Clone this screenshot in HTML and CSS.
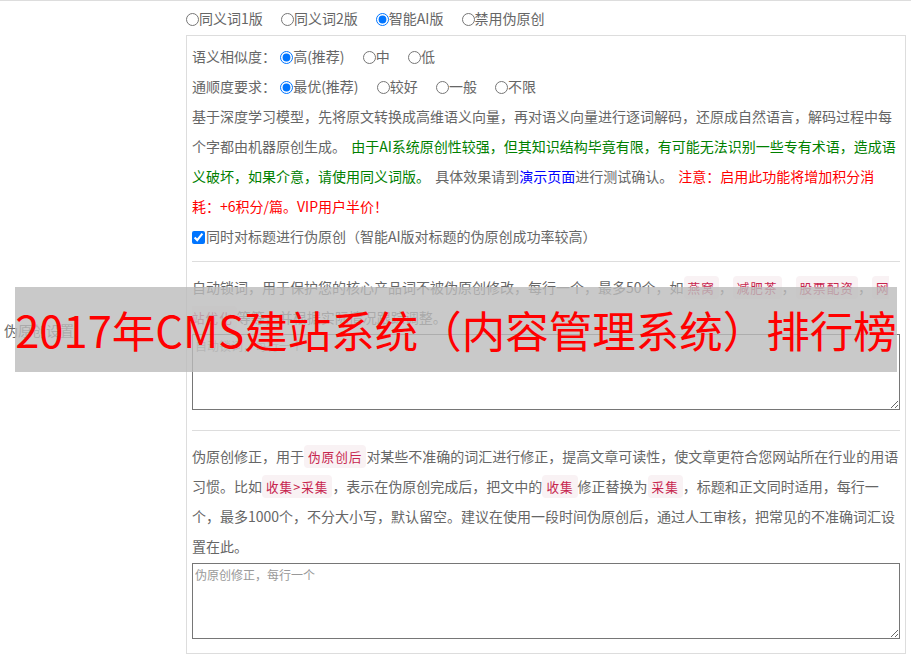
FILE: index.html
```html
<!DOCTYPE html>
<html>
<head>
    <meta charset="utf-8">
    <title>伪原创设置</title>
    <link rel="stylesheet" href="styles.css">
</head>
<body>
    <div class="form-row">
        <div class="row-label">伪原创设置</div>
        <div class="row-field">
            <div class="mode-line">
                <label class="opt"><input type="radio" name="mode">同义词1版</label>
                <label class="opt"><input type="radio" name="mode">同义词2版</label>
                <label class="opt"><input type="radio" name="mode" checked>智能AI版</label>
                <label class="opt"><input type="radio" name="mode">禁用伪原创</label>
            </div>

            <div class="panel">
                <div class="line">
                    <span class="line-title">语义相似度：</span>
                    <label class="opt"><input type="radio" name="sim" checked>高(推荐)</label>
                    <label class="opt"><input type="radio" name="sim">中</label>
                    <label class="opt"><input type="radio" name="sim">低</label>
                </div>
                <div class="line">
                    <span class="line-title">通顺度要求：</span>
                    <label class="opt"><input type="radio" name="flow" checked>最优(推荐)</label>
                    <label class="opt"><input type="radio" name="flow">较好</label>
                    <label class="opt"><input type="radio" name="flow">一般</label>
                    <label class="opt"><input type="radio" name="flow">不限</label>
                </div>
                <p class="desc">基于深度学习模型，先将原文转换成高维语义向量，再对语义向量进行逐词解码，还原成自然语言，解码过程中每个字都由机器原创生成。 <span class="green">由于AI系统原创性较强，但其知识结构毕竟有限，有可能无法识别一些专有术语，造成语义破坏，如果介意，请使用同义词版。</span> 具体效果请到<a class="demo" href="#">演示页面</a>进行测试确认。 <span class="red">注意：启用此功能将增加积分消耗：+6积分/篇。VIP用户半价！</span></p>
                <div class="line">
                    <label class="check"><input type="checkbox" checked>同时对标题进行伪原创（智能AI版对标题的伪原创成功率较高）</label>
                </div>

                <hr>

                <p class="desc">自动锁词，用于保护您的核心产品词不被伪原创修改，每行一个，最多50个，如<code>燕窝</code>，<code>减肥茶</code>，<code>股票配资</code>，<code>网站优化</code>等等，并根据实际情况跟踪调整。</p>
                <textarea placeholder="自动锁词，每行一个"></textarea>

                <hr class="after-box">

                <p class="desc">伪原创修正，用于<code>伪原创后</code>对某些不准确的词汇进行修正，提高文章可读性，使文章更符合您网站所在行业的用语习惯。比如<code>收集&gt;采集</code>，表示在伪原创完成后，把文中的<code>收集</code>修正替换为<code>采集</code>，标题和正文同时适用，每行一个，最多1000个，不分大小写，默认留空。建议在使用一段时间伪原创后，通过人工审核，把常见的不准确词汇设置在此。</p>
                <textarea placeholder="伪原创修正，每行一个"></textarea>
            </div>
        </div>
    </div>

    <div class="banner">2017年CMS建站系统（内容管理系统）排行榜</div>
</body>
</html>
```

FILE: styles.css
```css
body {
    margin: 0;
    padding: 0;
    font-family: "Noto Sans CJK SC", "Liberation Sans", sans-serif;
    font-size: 14px;
    color: #666;
    background-color: #fff;
}

.form-row {
    display: grid;
    grid-template-columns: 186px 1fr;
    border-top: 1px solid #ddd;
}

.row-label {
    align-self: center;
    padding-left: 4px;
    line-height: 20px;
}

.row-field {
    padding-bottom: 4px;
    padding-right: 5px;
}

.mode-line {
    height: 34px;
    line-height: 34px;
}

.opt {
    margin-right: 15px;
    white-space: nowrap;
}

.opt input,
.check input {
    width: 13px;
    height: 13px;
    margin: 0;
    vertical-align: -2px;
}

.check input {
    margin-right: 1px;
}

.panel {
    border: 1px solid #ddd;
    padding: 5px 5px 14px 5px;
}

.line {
    line-height: 30px;
    height: 30px;
}

.line-title {
    margin-right: 1px;
}

.desc {
    margin: 0;
    line-height: 30px;
    word-spacing: 2px;
}

.green {
    color: #008000;
}

.red {
    color: #f00;
}

.demo {
    color: #00f;
    text-decoration: none;
}

code {
    font-family: "Noto Sans CJK SC", "Liberation Mono", monospace;
    font-size: 12.6px;
    line-height: 1;
    letter-spacing: 1px;
    color: #c7254e;
    background-color: #f9f2f4;
    border-radius: 4px;
    padding: 2px 4px;
}

hr {
    border: 0;
    border-top: 1px solid #ddd;
    margin: 10px 0;
}

hr.after-box {
    margin-top: 20px;
}

textarea {
    display: block;
    box-sizing: border-box;
    width: 100%;
    height: 76px;
    margin: 2px 0 0 0;
    padding: 2px;
    border: 1px solid #767676;
    font-family: "Noto Sans CJK SC", sans-serif;
    font-size: 12px;
    color: #333;
}

textarea::placeholder {
    color: #999;
}

.banner {
    position: absolute;
    left: 15px;
    top: 287px;
    width: 882px;
    height: 85px;
    line-height: 85px;
    background-color: rgba(187, 187, 187, 0.8);
    color: #f00;
    font-size: 43.5px;
    text-align: center;
    white-space: nowrap;
    overflow: hidden;
}
```
